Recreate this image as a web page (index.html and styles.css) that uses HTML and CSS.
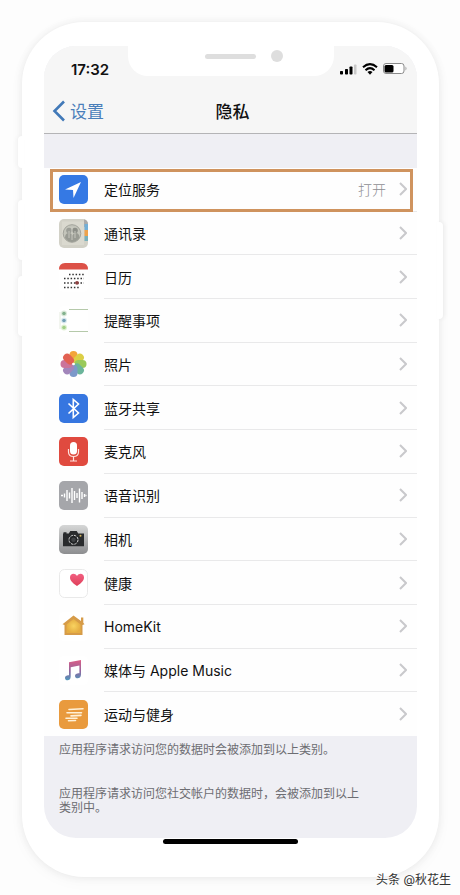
FILE: index.html
```html
<!DOCTYPE html>
<html lang="zh-CN">
<head>
<meta charset="utf-8">
<meta name="viewport" content="width=device-width, initial-scale=1">
<title>隐私</title>
<link rel="stylesheet" href="styles.css">
</head>
<body>
<div class="phone">
  <span class="side mute"></span>
  <span class="side volume-up"></span>
  <span class="side volume-down"></span>
  <span class="side power"></span>
  <div class="notch"><span class="speaker"></span><span class="camera"></span></div>
  <main class="screen">
    <header class="top">
      <div class="status">
        <span class="time">17:32</span>
        <svg class="signals" width="70" height="14" viewBox="0 0 70 14">
          <rect x="1" y="9" width="3" height="3.500" rx=".8"/>
          <rect x="6" y="7" width="3" height="5.500" rx=".8"/>
          <rect x="10.500" y="4.500" width="3" height="8" rx=".8"/>
          <rect x="15" y="2.500" width="2.500" height="10" rx=".8" fill="#c9c9c9"/>
          <g fill="none" stroke="#000" stroke-width="2.100">
            <path d="M24 5.300Q31 -1 38 5.300M26.500 8.200Q31 4 35.500 8.200"/>
          </g>
          <path d="M28.500 10Q31 8 33.500 10L31 12.800Z"/>
          <rect x="44.500" y="1.500" width="20.500" height="10" rx="2.500" fill="#fff" stroke="#8a8a8a"/>
          <rect x="45.500" y="3" width="9" height="7.500" rx="1.500"/>
          <path d="M66.500 4.500Q68.500 6.500 66.500 8.500Z" fill="#999"/>
        </svg>
      </div>
      <nav class="nav">
        <a class="back" href="#"><svg width="14" height="22" viewBox="0 0 14 22"><path d="M12 1.500L2.500 11L12 20.500" fill="none" stroke="#4179b8" stroke-width="2.600"/></svg>设置</a>
        <h1>隐私</h1>
      </nav>
    </header>
    <div class="list">
      <a class="row marked" href="#">
        <svg class="icon" viewBox="0 0 29 29"><rect width="29" height="29" rx="5" fill="#3579e4"/><path d="M22 7L6 14.500L14 15L14.500 23Z" fill="#fff"/></svg>
        <span class="label">定位服务<span class="value">打开</span><svg class="chevron" viewBox="0 0 8 14"><path d="M1 1l6 6-6 6"/></svg></span>
      </a>
      <a class="row" href="#">
        <svg class="icon" viewBox="0 0 29 29"><rect width="29" height="29" rx="5" fill="#d2d1c7"/><path d="M25 .5a5 5 0 0 1 4 5V8h-4z" fill="#aaa"/><path d="M25.500 5H29v6h-3.500z" fill="#72afd7"/><path d="M25.500 11H29v6h-3.500z" fill="#eda24c"/><path d="M25.500 17H29v5h-3.500z" fill="#78b0bb"/><path d="M3 2.500h22V26H3z" fill="#dad9cf"/><circle cx="13" cy="14.500" r="8.800" fill="#c4c5bb" stroke="#a2a39b"/><circle cx="10" cy="11.500" r="2.800" fill="#9b9d96"/><circle cx="16" cy="11.500" r="2.800" fill="#8d8f88"/><path d="M6 19q0-5 4-5 3 0 3.500 2.500Q14 14 16.500 14q4 0 4 5-3.500 4-7.500 4t-7-4z" fill="#999b93"/><path d="M13 8v13M10 12v7M16 12v7" stroke="#d2d2c9" stroke-width=".8"/></svg>
        <span class="label">通讯录<svg class="chevron" viewBox="0 0 8 14"><path d="M1 1l6 6-6 6"/></svg></span>
      </a>
      <a class="row" href="#">
        <svg class="icon" viewBox="0 0 29 29"><rect width="29" height="29" rx="5" fill="#fff"/><path d="M0 6.500Q0 0 6 0h17q6 0 6 6.500z" fill="#dc5147"/><g stroke="#333" stroke-width="1.500" stroke-dasharray="1.500 1.800"><path d="M10 11.500h15M5 15.500h20M5 20h20M5 24.500h15"/></g><circle cx="18" cy="19.800" r="1.900" fill="#8d4040"/></svg>
        <span class="label">日历<svg class="chevron" viewBox="0 0 8 14"><path d="M1 1l6 6-6 6"/></svg></span>
      </a>
      <a class="row" href="#">
        <svg class="icon" viewBox="0 0 29 29"><rect width="29" height="29" rx="5" fill="#fff"/><path d="M10 3.500h19M10 25.500h19" stroke="#b5c9aa"/><path d="M1 6v17" stroke="#e5eadf"/><circle cx="5" cy="7.500" r="3" fill="#dceadb"/><circle cx="5" cy="14.500" r="3" fill="#dceaf0"/><circle cx="5" cy="21.500" r="3" fill="#dff0d2"/><circle cx="5" cy="7.500" r="1.800" fill="#83b18e"/><circle cx="5" cy="14.500" r="1.800" fill="#739fb5"/><circle cx="5" cy="21.500" r="1.800" fill="#a2d087"/></svg>
        <span class="label">提醒事项<svg class="chevron" viewBox="0 0 8 14"><path d="M1 1l6 6-6 6"/></svg></span>
      </a>
      <a class="row" href="#">
        <svg class="icon" viewBox="0 0 29 29"><rect width="29" height="29" rx="5" fill="#fff"/><g opacity=".9"><rect x="10.500" y="1" width="8" height="12" rx="4" fill="#f29b25"/><rect x="10.500" y="1" width="8" height="12" rx="4" fill="#d9ca32" transform="rotate(45 14.500 14)"/><rect x="10.500" y="1" width="8" height="12" rx="4" fill="#8fc54a" transform="rotate(90 14.500 14)"/><rect x="10.500" y="1" width="8" height="12" rx="4" fill="#5cae91" transform="rotate(135 14.500 14)"/><rect x="10.500" y="1" width="8" height="12" rx="4" fill="#6e8ec5" transform="rotate(180 14.500 14)"/><rect x="10.500" y="1" width="8" height="12" rx="4" fill="#9979b4" transform="rotate(225 14.500 14)"/><rect x="10.500" y="1" width="8" height="12" rx="4" fill="#c66591" transform="rotate(270 14.500 14)"/><rect x="10.500" y="1" width="8" height="12" rx="4" fill="#df5140" transform="rotate(315 14.500 14)"/></g><circle cx="14.500" cy="14" r="1.300" fill="#fff"/></svg>
        <span class="label">照片<svg class="chevron" viewBox="0 0 8 14"><path d="M1 1l6 6-6 6"/></svg></span>
      </a>
      <a class="row" href="#">
        <svg class="icon" viewBox="0 0 29 29"><rect width="29" height="29" rx="5" fill="#3676e0"/><path d="M9.500 9.500l10 9.500-5.200 4.500V5.500l5.200 4.500-10 9.500" fill="none" stroke="#fff" stroke-width="1.600"/></svg>
        <span class="label">蓝牙共享<svg class="chevron" viewBox="0 0 8 14"><path d="M1 1l6 6-6 6"/></svg></span>
      </a>
      <a class="row" href="#">
        <svg class="icon" viewBox="0 0 29 29"><rect width="29" height="29" rx="5" fill="#e04a3f"/><rect x="11" y="5" width="7" height="12.500" rx="3.500" fill="#fff"/><path d="M9.500 12v3q0 4.500 5 4.500t5-4.500v-3M14.500 19.500V24M11 24h7" fill="none" stroke="#ffe3df" stroke-width="1.200"/></svg>
        <span class="label">麦克风<svg class="chevron" viewBox="0 0 8 14"><path d="M1 1l6 6-6 6"/></svg></span>
      </a>
      <a class="row" href="#">
        <svg class="icon" viewBox="0 0 29 29"><rect width="29" height="29" rx="5" fill="#a5a6aa"/><path d="M2 14.500h2M5.500 12.500v4M8 9v11M10.500 11.500v6M13 7v15M15.500 10v9M18 12v5M20.500 7.500v14M23 11v7M25.500 13v3M26.500 14.500h1" fill="none" stroke="#fff" stroke-width="1.400"/></svg>
        <span class="label">语音识别<svg class="chevron" viewBox="0 0 8 14"><path d="M1 1l6 6-6 6"/></svg></span>
      </a>
      <a class="row" href="#">
        <svg class="icon" viewBox="0 0 29 29"><defs><linearGradient id="cam" x2="0" y2="1"><stop stop-color="#d5d6d6"/><stop offset="1" stop-color="#8d8e90"/></linearGradient></defs><rect width="29" height="29" rx="5" fill="url(#cam)"/><path d="M4.500 8.500V7.200h3v1.300h2.300L11.300 6h6.400l1.500 2.500H25v12.800H4V8.500z" fill="#292b2d"/><circle cx="14.500" cy="14.800" r="4.500" fill="#202224" stroke="#d5d5d5" stroke-dasharray="2.500 1"/><circle cx="14.500" cy="14.800" r="2.300" fill="#3f4245"/><circle cx="21.500" cy="10.800" r="1" fill="#d5b65d"/></svg>
        <span class="label">相机<svg class="chevron" viewBox="0 0 8 14"><path d="M1 1l6 6-6 6"/></svg></span>
      </a>
      <a class="row" href="#">
        <svg class="icon" viewBox="0 0 29 29"><defs><linearGradient id="heart" x2="0" y2="1"><stop stop-color="#f25f81"/><stop offset="1" stop-color="#df3f59"/></linearGradient></defs><rect x=".5" y=".5" width="28" height="28" rx="5" fill="#fff" stroke="#e9e9e9"/><path d="M18 17C13 13.700 11 11.300 11 8.500c0-4.300 5-5 7-1.600 2-3.400 7-2.700 7 1.600 0 2.800-2 5.200-7 8.500z" fill="url(#heart)"/></svg>
        <span class="label">健康<svg class="chevron" viewBox="0 0 8 14"><path d="M1 1l6 6-6 6"/></svg></span>
      </a>
      <a class="row" href="#">
        <svg class="icon" viewBox="0 0 29 29"><defs><radialGradient id="home"><stop stop-color="#f9d360"/><stop offset="1" stop-color="#e5ad42"/></radialGradient></defs><rect width="29" height="29" rx="5" fill="#fff"/><path d="M14.500 3.500L22 9V5.500h2.300v5.200l1.200 1.600-2 .8V23h-18V13.100l-2-.8z" fill="#d69b48"/><path d="M14.500 7l7.200 5.500V21H7.500v-8.500z" fill="url(#home)"/></svg>
        <span class="label">HomeKit<svg class="chevron" viewBox="0 0 8 14"><path d="M1 1l6 6-6 6"/></svg></span>
      </a>
      <a class="row" href="#">
        <svg class="icon" viewBox="0 0 29 29"><defs><linearGradient id="note" x2="0" y2="1"><stop stop-color="#dd5d86"/><stop offset=".55" stop-color="#90669f"/><stop offset="1" stop-color="#5099bd"/></linearGradient></defs><rect width="29" height="29" rx="5" fill="#fff"/><path d="M10 6.200L22 4v14.500c0 5-6 4.700-6 1.500 0-2.500 3-2.800 4.400-2.800V9.400l-8.700 1.800v9.300c0 5-5.700 4.700-5.700 1.500 0-2.600 2.800-2.800 4-2.800z" fill="url(#note)"/></svg>
        <span class="label">媒体与 Apple Music<svg class="chevron" viewBox="0 0 8 14"><path d="M1 1l6 6-6 6"/></svg></span>
      </a>
      <a class="row" href="#">
        <svg class="icon" viewBox="0 0 29 29"><rect width="29" height="29" rx="5" fill="#e99a3d"/><path d="M10 9.500l14-.8M8 12.800h14.500M12 15.900l10-.5M7 18.200H18M9.500 20.800l7-.3" fill="none" stroke="#fff1d8" stroke-width="1.600" stroke-linecap="round"/></svg>
        <span class="label">运动与健身<svg class="chevron" viewBox="0 0 8 14"><path d="M1 1l6 6-6 6"/></svg></span>
      </a>
    </div>
    <footer class="notes">
      <p>应用程序请求访问您的数据时会被添加到以上类别。</p>
      <p>应用程序请求访问您社交帐户的数据时，会被添加到以上类别中。</p>
    </footer>
  </main>
  <div class="home-bar"></div>
</div>
<div class="credit">头条 @秋花生</div>
</body>
</html>
```
FILE: styles.css
```css
* { box-sizing: border-box; }

body {
  margin: 0;
  padding: 22px 21px 18px 22px;
  position: relative;
  background: #fdfdfd;
  color: #111;
  font-family: Inter, "Noto Sans CJK SC", sans-serif;
  font-size: 14px;
}

a { color: inherit; text-decoration: none; }

.phone {
  position: relative;
  padding: 24px 22px 33px;
  border-radius: 62px;
  background: #fff;
  box-shadow: 0 0 8px rgba(0, 0, 0, 0.07), 0 4px 16px rgba(0, 0, 0, 0.03);
}

.side {
  position: absolute;
  left: -4px;
  width: 6px;
  height: 60px;
  border-radius: 4px 0 0 4px;
  background: #fff;
  box-shadow: -2px 0 4px rgba(0, 0, 0, 0.03);
}
.mute { top: 114px; height: 32px; }
.volume-up { top: 178px; }
.volume-down { top: 254px; }
.power {
  top: 200px;
  right: -4px;
  left: auto;
  height: 97px;
  border-radius: 0 4px 4px 0;
  box-shadow: 2px 0 4px rgba(0, 0, 0, 0.05);
}

.notch {
  position: absolute;
  z-index: 1;
  top: 20px;
  left: 50%;
  width: 206px;
  height: 34px;
  margin-left: -103px;
  border-radius: 0 0 20px 20px;
  background: #fff;
  display: flex;
  align-items: flex-start;
  justify-content: flex-end;
  gap: 15px;
  padding: 8px 51px 0 0;
}
.speaker { width: 51px; height: 5px; margin-top: 4px; border-radius: 3px; background: #dedede; }
.camera { width: 12px; height: 12px; border-radius: 50%; background: #dedede; }

.screen {
  overflow: hidden;
  border-radius: 32px;
  background: #efeff4;
}

.top {
  background: #f6f6f6;
  border-bottom: 1px solid #b4b4b6;
}
.status {
  display: flex;
  align-items: center;
  justify-content: space-between;
  height: 44px;
  padding: 2px 8px 0 27px;
}
.time { font-size: 15px; font-weight: 600; }
.nav {
  display: grid;
  grid-template-columns: 1fr auto 1fr;
  align-items: center;
  height: 43px;
  padding: 0 4px 2px 8px;
  font-size: 17px;
}
.back { display: flex; align-items: center; gap: 4px; color: #4a7fba; }
h1 { margin: 0; font-size: 17px; font-weight: 500; }

.list {
  display: grid;
  grid-auto-rows: 1fr;
  height: 568px;
  margin-top: 34px;
  background: #fefefe;
}
.row {
  position: relative;
  display: flex;
  align-items: center;
  gap: 16px;
  padding-left: 15px;
}
.marked::after {
  content: "";
  position: absolute;
  inset: 1px 4px 0 6px;
  border: 3px solid #cf935e;
}
.icon { flex: none; width: 29px; height: 29px; }
.label {
  flex: 1;
  align-self: stretch;
  display: flex;
  align-items: center;
  padding-right: 10px;
  border-bottom: 1px solid #e9e9ea;
}
.row:last-child .label { border-bottom: 0; }
.value { margin-left: auto; color: #8e8e93; font-weight: 300; }
.chevron {
  width: 8px;
  height: 14px;
  margin-left: auto;
  fill: none;
  stroke: #c9c9cc;
  stroke-width: 2;
}
.value + .chevron { margin-left: 13px; }

.notes {
  padding: 7px 48px 23px 15px;
  color: #6d6d72;
  font-size: 12px;
  line-height: 14px;
}
.notes p { margin: 0 0 30px; }
.notes p:last-child { margin: 0; }

.home-bar {
  width: 135px;
  height: 5px;
  margin: 1px auto 0;
  border-radius: 3px;
  background: #000;
}

.credit {
  position: absolute;
  right: 9px;
  bottom: 6px;
  color: #333;
  font-size: 12px;
  line-height: 18px;
  text-shadow: 0 0 2px #fff, 1px 1px 0 #fff;
}
```
